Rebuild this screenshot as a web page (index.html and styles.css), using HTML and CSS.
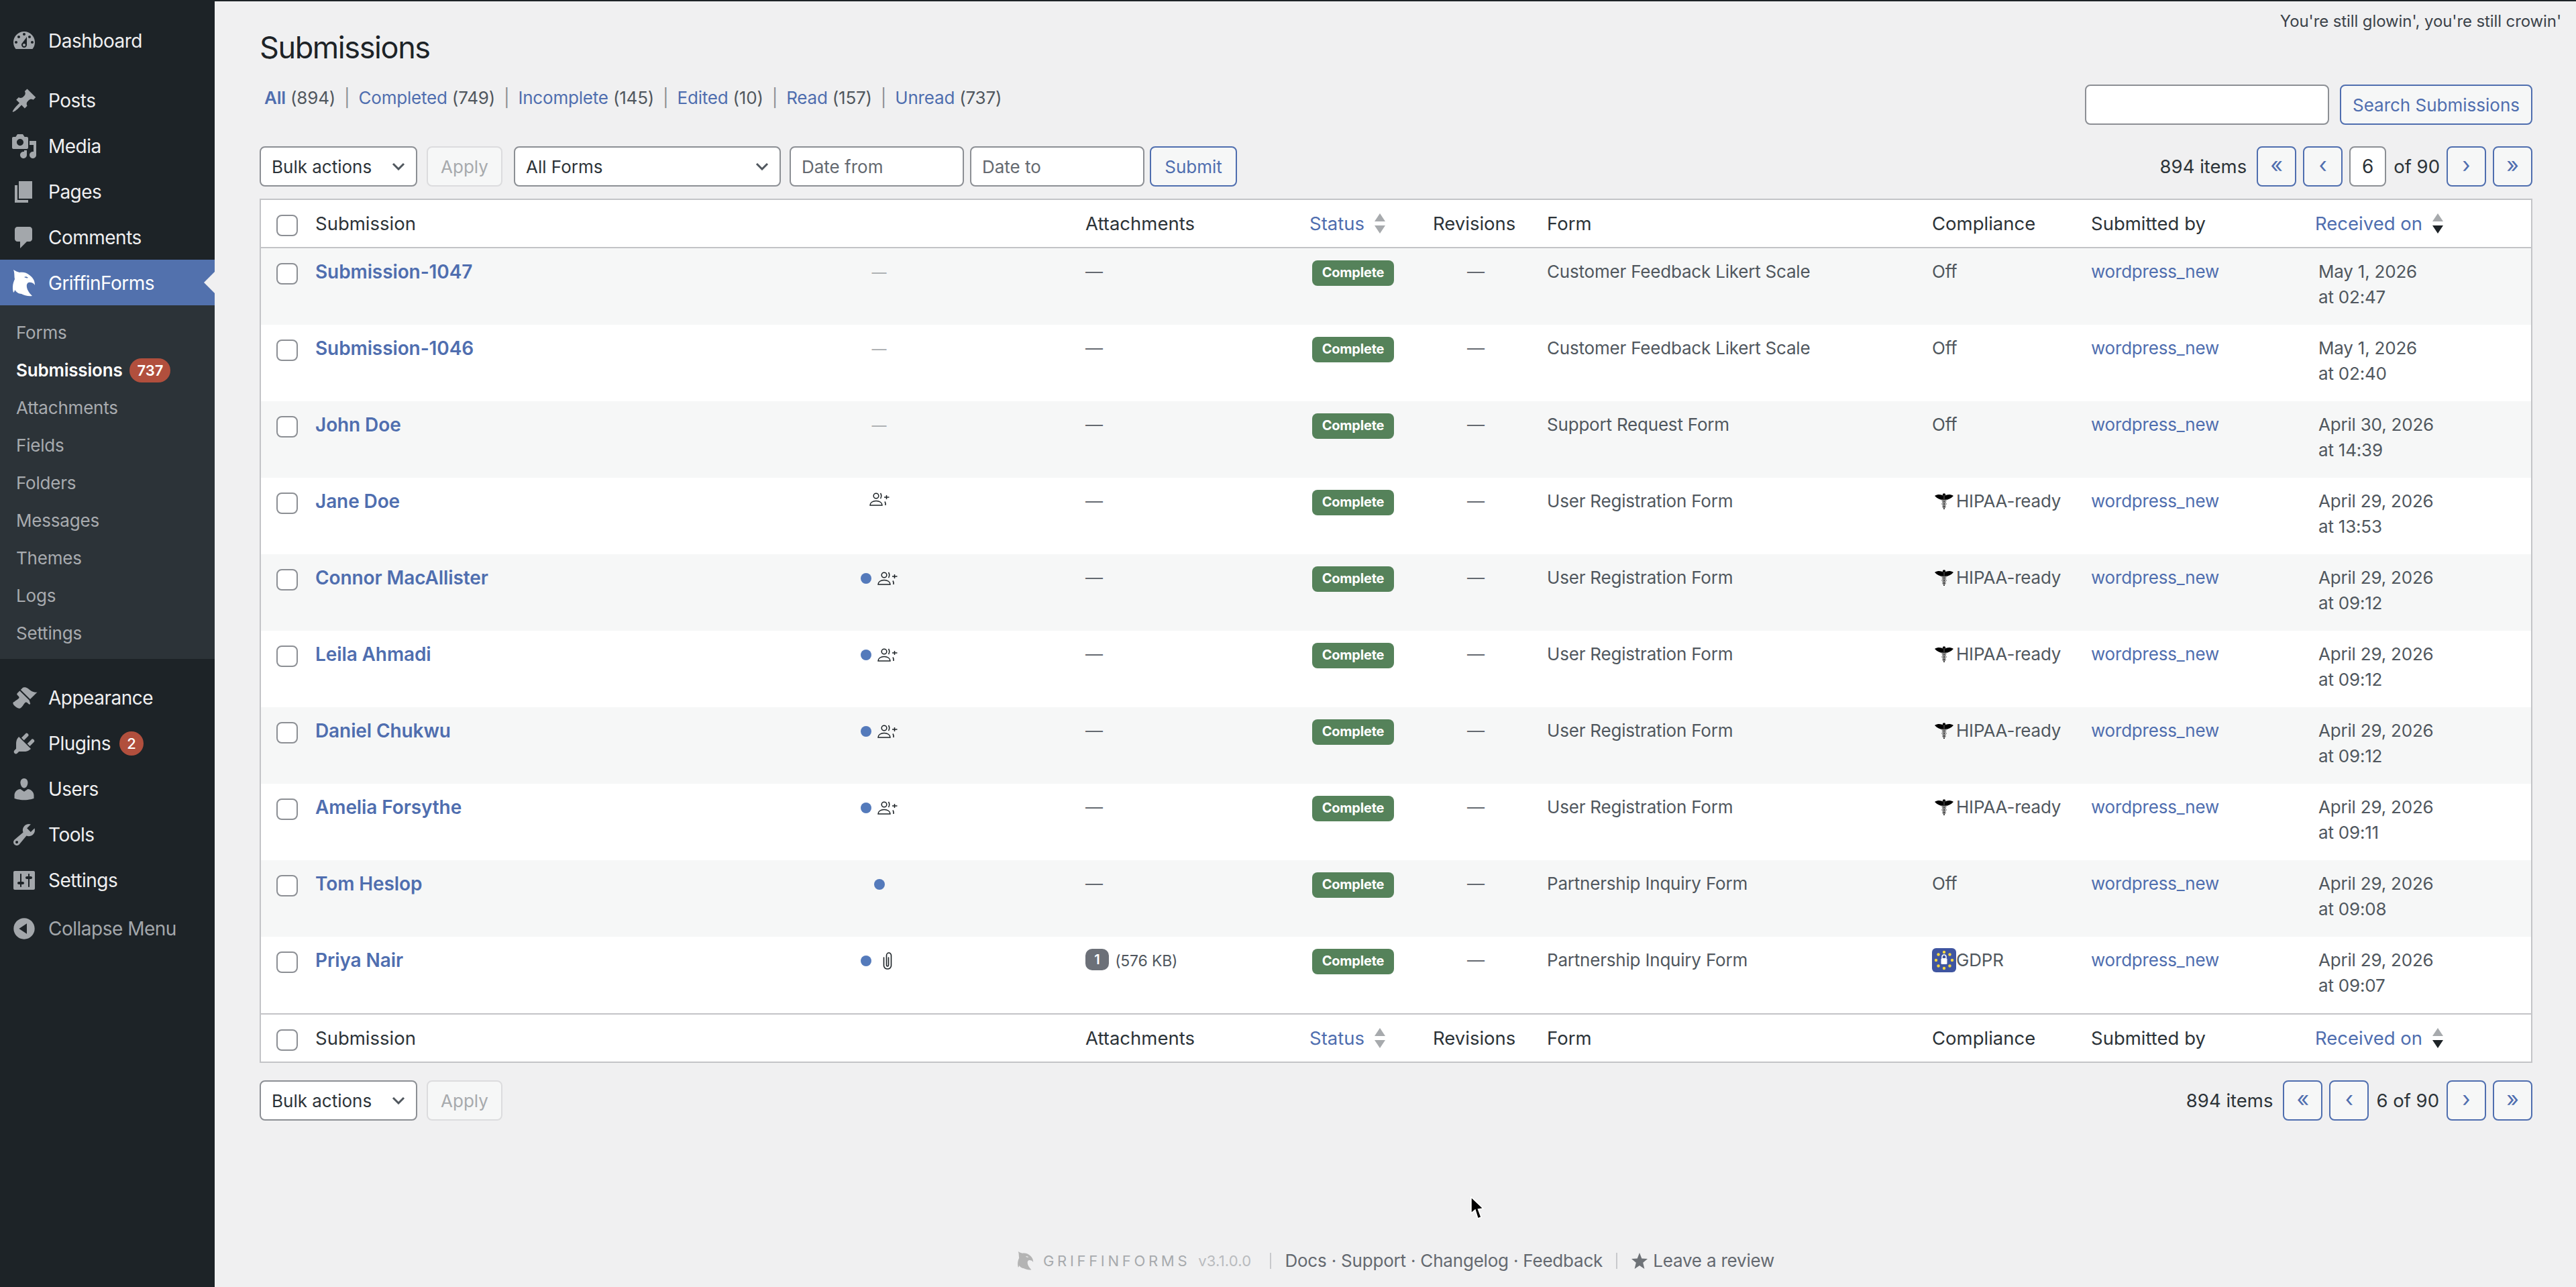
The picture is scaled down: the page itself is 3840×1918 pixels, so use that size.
FILE: index.html
```html
<!DOCTYPE html>
<html lang="en">
  <head>
    <meta charset="UTF-8" />
    <title>Submissions</title>
    <link rel="stylesheet" href="styles.css">
  </head>
  <body>
    <svg class="defs" width="0" height="0">
      <symbol id="griffin" viewBox="0 0 34 40">
        <path fill-rule="evenodd" d="M1 0 C4 2 7 3 10 4 C15 3 21 4 25 8 C29 11 33 15 33 23 C31 20 29 19 27 19 C24 18 22 19 21 22 C20 27 23 33 29 39 C23 40 17 38 13 36 C9 36 5 33 3 30 C3 32 2 33 1 34 C-1 27 0 20 3 14 C2 9 3 5 1 0 Z M17 11 C19 10 21 10 23 12 C21 13 19 12 17 11 Z" />
      </symbol>
      <symbol id="person-plus" viewBox="0 0 30 20">
        <g fill="none" stroke="#1d2327" stroke-width="1.500">
          <circle cx="10" cy="5" r="3.800" />
          <path d="M16.500 1 q2.500 4 0 8" />
          <path d="M1 19 c0-4 4-6.500 9-6.500 s9 2.500 9 6.500 z" />
          <path d="M23 13.500 q1.500 2.500 1 5.500" />
          <path d="M25.500 4 v6 M22 7 h7.500" />
        </g>
      </symbol>
      <symbol id="caduceus" viewBox="0 0 28 24">
        <path fill="#000" d="M0 4 C5 1 10 2 13 4 L13 10 C8 10 4 8 0 4 Z M28 4 C23 1 18 2 15 4 L15 10 C20 10 24 8 28 4 Z" />
        <circle cx="14" cy="2.500" r="2.200" fill="#000" />
        <path fill="#333" d="M13 3 h2 v21 h-2 z" />
        <path fill="none" stroke="#888" stroke-width="1.500" d="M10 10 C18 11 18 13 14 14 C10 15 10 17 14 18 C17 19 17 21 14 22 M18 10 C10 11 10 13 14 14 C18 15 18 17 14 18 C11 19 11 21 14 22" />
      </symbol>
    </svg>

    <aside class="sidebar">
      <ul class="menu">
        <li class="menu-item">
          <svg class="menu-icon" viewBox="0 0 20 20"><path d="M3.760 16h12.480c1.100-1.370 1.760-3.110 1.760-5 0-4.420-3.580-8-8-8s-8 3.580-8 8c0 1.890.660 3.630 1.760 5zM10 4c.550 0 1 .450 1 1s-.450 1-1 1-1-.450-1-1 .450-1 1-1zM6 6c.550 0 1 .450 1 1s-.450 1-1 1-1-.450-1-1 .450-1 1-1zm8 0c.550 0 1 .450 1 1s-.450 1-1 1-1-.450-1-1 .450-1 1-1zm-5.370 5.550L12 7v6c0 1.100-.900 2-2 2s-2-.900-2-2c0-.570.240-1.080.630-1.450zM4 10c.550 0 1 .450 1 1s-.450 1-1 1-1-.450-1-1 .450-1 1-1zm12 0c.550 0 1 .450 1 1s-.450 1-1 1-1-.450-1-1 .450-1 1-1zm-5 3c0-.550-.450-1-1-1s-1 .450-1 1 .450 1 1 1 1-.450 1-1z" /></svg>
          Dashboard
        </li>
        <li class="menu-item menu-gap">
          <svg class="menu-icon" viewBox="0 0 20 20"><path d="M10.440 3.020l1.820-1.820 6.360 6.350-1.830 1.820c-1.050-.680-2.480-.570-3.410.360l-.750.750c-.920.930-1.040 2.350-.350 3.410l-1.830 1.820-2.410-2.410-2.800 2.790c-.420.420-3.380 2.710-3.800 2.290s1.860-3.390 2.280-3.810l2.790-2.790L4.100 9.360l1.830-1.820c1.050.690 2.480.570 3.400-.360l.750-.750c.930-.920 1.050-2.350.360-3.410z" /></svg>
          Posts
        </li>
        <li class="menu-item">
          <svg class="menu-icon" viewBox="0 0 20 20"><path d="M13 11V4c0-.550-.450-1-1-1h-1.670L9 1H5L3.670 3H2c-.550 0-1 .450-1 1v7c0 .550.450 1 1 1h10c.550 0 1-.450 1-1zM7 4.500c1.380 0 2.500 1.120 2.500 2.500S8.380 9.500 7 9.500 4.500 8.380 4.500 7 5.620 4.500 7 4.500zM14 6h5v10.500c0 1.380-1.120 2.500-2.500 2.500S14 17.880 14 16.500s1.120-2.500 2.500-2.500c.170 0 .340.020.500.050V9h-3V6zm-4 8.050V13h2v3.500c0 1.380-1.120 2.500-2.500 2.500S7 17.880 7 16.500 8.120 14 9.500 14c.170 0 .340.020.500.050z" /></svg>
          Media
        </li>
        <li class="menu-item">
          <svg class="menu-icon" viewBox="0 0 20 20"><path d="M6 15V2h10v13H6zm-1 1h8v2H3V5h2v11z" /></svg>
          Pages
        </li>
        <li class="menu-item">
          <svg class="menu-icon" viewBox="0 0 20 20"><path d="M5 2h9c1.100 0 2 .900 2 2v7c0 1.100-.900 2-2 2h-2l-5 5v-5H5c-1.100 0-2-.900-2-2V4c0-1.100.900-2 2-2z" /></svg>
          Comments
        </li>
        <li class="menu-item menu-current">
          <svg class="griffin-icon"><use href="#griffin" /></svg>
          GriffinForms
        </li>
      </ul>

      <ul class="submenu">
        <li>Forms</li>
        <li class="submenu-current">Submissions <span class="count count-wide">737</span></li>
        <li>Attachments</li>
        <li>Fields</li>
        <li>Folders</li>
        <li>Messages</li>
        <li>Themes</li>
        <li>Logs</li>
        <li>Settings</li>
      </ul>

      <ul class="menu menu-lower">
        <li class="menu-item">
          <svg class="menu-icon" viewBox="0 0 20 20"><path d="M14.480 11.060L7.410 3.990l1.500-1.500c.500-.560 2.300-.470 3.510.320 1.210.800 1.430 1.280 2.910 2.100 1.180.640 2.450 1.260 4.450.850zm-.710.710L6.700 4.700 4.930 6.470c-.390.390-.390 1.020 0 1.410l1.060 1.060c.390.390.390 1.030 0 1.420-.600.600-1.430 1.110-2.210 1.690-.350.260-.700.530-1.010.840C1.430 13.230 1 14.500 3.500 16.500s3.440 1.570 4.780.200c.280-.280.540-.640.800-1.010.580-.780 1.090-1.610 1.690-2.210.390-.390 1.020-.390 1.410 0l1.060 1.060c.390.390 1.020.390 1.410 0z" /></svg>
          Appearance
        </li>
        <li class="menu-item">
          <svg class="menu-icon" viewBox="0 0 20 20"><path d="M13.110 4.360L9.870 7.600 8 5.730l3.240-3.240c.350-.340 1.050-.200 1.560.320.520.510.660 1.210.310 1.550zm-8 1.770l.910-1.120 9.010 9.010-1.190.840c-.710.710-2.630 1.160-3.820 1.160H6.140L4.900 17.260c-.590.590-1.540.590-2.120 0-.590-.580-.590-1.530 0-2.120l1.240-1.240v-3.880c0-1.130.400-3.190 1.090-3.890zm7.260 3.970l3.240-3.240c.340-.350 1.040-.210 1.550.31.520.510.660 1.210.310 1.550l-3.240 3.250z" /></svg>
          Plugins <span class="count count-menu">2</span>
        </li>
        <li class="menu-item">
          <svg class="menu-icon" viewBox="0 0 20 20"><path d="M10 9.250c-2.270 0-2.730-3.440-2.730-3.440C7 4.020 7.820 2 9.970 2c2.160 0 2.980 2.020 2.710 3.810 0 0-.410 3.440-2.680 3.440zm0 2.570L12.720 10c2.390 0 4.520 2.330 4.520 4.530v2.490s-3.650 1.130-7.240 1.130c-3.650 0-7.240-1.130-7.240-1.130v-2.490c0-2.250 1.940-4.480 4.470-4.480z" /></svg>
          Users
        </li>
        <li class="menu-item">
          <svg class="menu-icon" viewBox="0 0 20 20"><path d="M16.680 9.770c-1.340 1.340-3.300 1.670-4.950.990l-5.410 6.520c-.990.990-2.590.990-3.580 0s-.990-2.590 0-3.570l6.520-5.420c-.680-1.650-.350-3.610.990-4.950 1.280-1.280 3.120-1.620 4.720-1.060l-2.890 2.890 2.820 2.820 2.860-2.870c.530 1.580.180 3.390-1.080 4.650zM3.810 16.210c.400.390 1.040.390 1.430 0 .400-.400.400-1.040 0-1.430-.390-.400-1.030-.400-1.430 0-.390.390-.390 1.030 0 1.430z" /></svg>
          Tools
        </li>
        <li class="menu-item">
          <svg class="menu-icon" viewBox="0 0 20 20"><path d="M18 16V4c0-.550-.450-1-1-1H3c-.550 0-1 .450-1 1v12c0 .550.450 1 1 1h14c.550 0 1-.450 1-1zM8 11h1c.550 0 1 .450 1 1s-.450 1-1 1H8v1.500c0 .280-.220.500-.500.500s-.500-.220-.500-.500V13H6c-.550 0-1-.450-1-1s.450-1 1-1h1V5.500c0-.280.220-.500.500-.500s.500.220.500.500V11zm5-2h-1c-.550 0-1-.450-1-1s.450-1 1-1h1V5.500c0-.280.220-.500.500-.500s.500.220.500.500V7h1c.550 0 1 .450 1 1s-.450 1-1 1h-1v5.500c0 .280-.220.500-.500.500s-.500-.220-.500-.500V9z" /></svg>
          Settings
        </li>
        <li class="menu-item menu-collapse">
          <svg class="menu-icon" viewBox="0 0 20 20"><path d="M10 2.160c4.330 0 7.840 3.510 7.840 7.840s-3.510 7.840-7.840 7.840S2.160 14.330 2.160 10 5.710 2.160 10 2.160zm2 11.720V6.120L6.180 9.970z" /></svg>
          Collapse Menu
        </li>
      </ul>
    </aside>

    <main class="content">
      <p class="dolly">You're still glowin', you're still crowin'</p>

      <div class="wrap">
        <h1>Submissions</h1>

        <div class="top-row">
          <ul class="subsubsub">
            <li><a class="current" href="#">All</a> (894)</li>
            <li><a href="#">Completed</a> (749)</li>
            <li><a href="#">Incomplete</a> (145)</li>
            <li><a href="#">Edited</a> (10)</li>
            <li><a href="#">Read</a> (157)</li>
            <li><a href="#">Unread</a> (737)</li>
          </ul>
          <form class="search-box">
            <input class="field search-input" type="search" />
            <button class="btn btn-search" type="button">Search Submissions</button>
          </form>
        </div>

        <div class="tablenav">
          <select class="field select select-bulk"><option>Bulk actions</option></select>
          <button class="btn btn-disabled btn-apply" type="button">Apply</button>
          <select class="field select select-forms"><option>All Forms</option></select>
          <input class="field date-input" type="text" placeholder="Date from" />
          <input class="field date-input" type="text" placeholder="Date to" />
          <button class="btn btn-submit" type="button">Submit</button>
          <div class="pages">
            <span class="items">894 items</span>
            <a class="page-btn" href="#">«</a>
            <a class="page-btn" href="#">‹</a>
            <input class="field page-input" type="text" value="6" />
            <span class="of">of 90</span>
            <a class="page-btn" href="#">›</a>
            <a class="page-btn" href="#">»</a>
          </div>
        </div>

        <table class="list-table">
          <colgroup>
            <col class="c-cb"><col class="c-title"><col class="c-flags"><col class="c-att"><col class="c-status"><col class="c-rev"><col class="c-form"><col class="c-comp"><col class="c-user"><col class="c-date">
          </colgroup>
          <thead>
            <tr>
              <th class="cb"><input class="check" type="checkbox" /></th>
              <th>Submission</th>
              <th></th>
              <th>Attachments</th>
              <th><a class="sort" href="#">Status <span class="arrows"><i class="up"></i><i class="down"></i></span></a></th>
              <th>Revisions</th>
              <th>Form</th>
              <th>Compliance</th>
              <th>Submitted by</th>
              <th><a class="sort" href="#">Received on <span class="arrows"><i class="up"></i><i class="down active"></i></span></a></th>
            </tr>
          </thead>
          <tbody>
            <tr>
              <td class="cb"><input class="check" type="checkbox" /></td>
              <td><a class="row-title" href="#">Submission-1047</a></td>
              <td class="flags"><span class="flag-dash">—</span></td>
              <td><span class="dash">—</span></td>
              <td><span class="status">Complete</span></td>
              <td class="rev"><span class="dash">—</span></td>
              <td>Customer Feedback Likert Scale</td>
              <td>Off</td>
              <td><a href="#">wordpress_new</a></td>
              <td class="date">May 1, 2026<br>at 02:47</td>
            </tr>
            <tr>
              <td class="cb"><input class="check" type="checkbox" /></td>
              <td><a class="row-title" href="#">Submission-1046</a></td>
              <td class="flags"><span class="flag-dash">—</span></td>
              <td><span class="dash">—</span></td>
              <td><span class="status">Complete</span></td>
              <td class="rev"><span class="dash">—</span></td>
              <td>Customer Feedback Likert Scale</td>
              <td>Off</td>
              <td><a href="#">wordpress_new</a></td>
              <td class="date">May 1, 2026<br>at 02:40</td>
            </tr>
            <tr>
              <td class="cb"><input class="check" type="checkbox" /></td>
              <td><a class="row-title" href="#">John Doe</a></td>
              <td class="flags"><span class="flag-dash">—</span></td>
              <td><span class="dash">—</span></td>
              <td><span class="status">Complete</span></td>
              <td class="rev"><span class="dash">—</span></td>
              <td>Support Request Form</td>
              <td>Off</td>
              <td><a href="#">wordpress_new</a></td>
              <td class="date">April 30, 2026<br>at 14:39</td>
            </tr>
            <tr>
              <td class="cb"><input class="check" type="checkbox" /></td>
              <td><a class="row-title" href="#">Jane Doe</a></td>
              <td class="flags"><div class="flag-group flag-raised"><svg class="flag-icon"><use href="#person-plus" /></svg></div></td>
              <td><span class="dash">—</span></td>
              <td><span class="status">Complete</span></td>
              <td class="rev"><span class="dash">—</span></td>
              <td>User Registration Form</td>
              <td><span class="comp"><svg class="hipaa"><use href="#caduceus" /></svg>HIPAA-ready</span></td>
              <td><a href="#">wordpress_new</a></td>
              <td class="date">April 29, 2026<br>at 13:53</td>
            </tr>
            <tr>
              <td class="cb"><input class="check" type="checkbox" /></td>
              <td><a class="row-title" href="#">Connor MacAllister</a></td>
              <td class="flags"><div class="flag-group"><span class="dot"></span><svg class="flag-icon"><use href="#person-plus" /></svg></div></td>
              <td><span class="dash">—</span></td>
              <td><span class="status">Complete</span></td>
              <td class="rev"><span class="dash">—</span></td>
              <td>User Registration Form</td>
              <td><span class="comp"><svg class="hipaa"><use href="#caduceus" /></svg>HIPAA-ready</span></td>
              <td><a href="#">wordpress_new</a></td>
              <td class="date">April 29, 2026<br>at 09:12</td>
            </tr>
            <tr>
              <td class="cb"><input class="check" type="checkbox" /></td>
              <td><a class="row-title" href="#">Leila Ahmadi</a></td>
              <td class="flags"><div class="flag-group"><span class="dot"></span><svg class="flag-icon"><use href="#person-plus" /></svg></div></td>
              <td><span class="dash">—</span></td>
              <td><span class="status">Complete</span></td>
              <td class="rev"><span class="dash">—</span></td>
              <td>User Registration Form</td>
              <td><span class="comp"><svg class="hipaa"><use href="#caduceus" /></svg>HIPAA-ready</span></td>
              <td><a href="#">wordpress_new</a></td>
              <td class="date">April 29, 2026<br>at 09:12</td>
            </tr>
            <tr>
              <td class="cb"><input class="check" type="checkbox" /></td>
              <td><a class="row-title" href="#">Daniel Chukwu</a></td>
              <td class="flags"><div class="flag-group"><span class="dot"></span><svg class="flag-icon"><use href="#person-plus" /></svg></div></td>
              <td><span class="dash">—</span></td>
              <td><span class="status">Complete</span></td>
              <td class="rev"><span class="dash">—</span></td>
              <td>User Registration Form</td>
              <td><span class="comp"><svg class="hipaa"><use href="#caduceus" /></svg>HIPAA-ready</span></td>
              <td><a href="#">wordpress_new</a></td>
              <td class="date">April 29, 2026<br>at 09:12</td>
            </tr>
            <tr>
              <td class="cb"><input class="check" type="checkbox" /></td>
              <td><a class="row-title" href="#">Amelia Forsythe</a></td>
              <td class="flags"><div class="flag-group"><span class="dot"></span><svg class="flag-icon"><use href="#person-plus" /></svg></div></td>
              <td><span class="dash">—</span></td>
              <td><span class="status">Complete</span></td>
              <td class="rev"><span class="dash">—</span></td>
              <td>User Registration Form</td>
              <td><span class="comp"><svg class="hipaa"><use href="#caduceus" /></svg>HIPAA-ready</span></td>
              <td><a href="#">wordpress_new</a></td>
              <td class="date">April 29, 2026<br>at 09:11</td>
            </tr>
            <tr>
              <td class="cb"><input class="check" type="checkbox" /></td>
              <td><a class="row-title" href="#">Tom Heslop</a></td>
              <td class="flags"><div class="flag-group"><span class="dot"></span></div></td>
              <td><span class="dash">—</span></td>
              <td><span class="status">Complete</span></td>
              <td class="rev"><span class="dash">—</span></td>
              <td>Partnership Inquiry Form</td>
              <td>Off</td>
              <td><a href="#">wordpress_new</a></td>
              <td class="date">April 29, 2026<br>at 09:08</td>
            </tr>
            <tr>
              <td class="cb"><input class="check" type="checkbox" /></td>
              <td><a class="row-title" href="#">Priya Nair</a></td>
              <td class="flags">
                <div class="flag-group">
                  <span class="dot"></span>
                  <svg class="clip-icon" viewBox="0 0 18 26"><path fill="none" stroke="#1d2327" stroke-width="1.600" stroke-linecap="round" d="M10.500 8 V19 a1.500 2 0 0 1 -3 0 V5 a3.500 4 0 0 1 7 0 V20 a5.500 5 0 0 1 -11 0 V8" /></svg>
                </div>
              </td>
              <td><span class="att-count">1</span> <span class="att-size">(576 KB)</span></td>
              <td><span class="status">Complete</span></td>
              <td class="rev"><span class="dash">—</span></td>
              <td>Partnership Inquiry Form</td>
              <td>
                <span class="comp">
                  <svg class="gdpr" viewBox="0 0 36 36">
                    <rect width="36" height="36" rx="6" fill="#3f55a0" />
                    <g fill="#f5d63d">
                      <circle cx="18" cy="6" r="2.200" /><circle cx="9.500" cy="9.500" r="2.200" /><circle cx="26.500" cy="9.500" r="2.200" />
                      <circle cx="6" cy="18" r="2.200" /><circle cx="30" cy="18" r="2.200" />
                      <circle cx="9.500" cy="26.500" r="2.200" /><circle cx="26.500" cy="26.500" r="2.200" /><circle cx="18" cy="30" r="2.200" />
                    </g>
                    <rect x="13.500" y="15" width="9" height="9" rx="1.500" fill="#fff" />
                    <path d="M15 15 v-2 a3 3 0 0 1 6 0 v2" fill="none" stroke="#fff" stroke-width="1.500" />
                  </svg>GDPR
                </span>
              </td>
              <td><a href="#">wordpress_new</a></td>
              <td class="date">April 29, 2026<br>at 09:07</td>
            </tr>
          </tbody>
          <tfoot>
            <tr>
              <th class="cb"><input class="check" type="checkbox" /></th>
              <th>Submission</th>
              <th></th>
              <th>Attachments</th>
              <th><a class="sort" href="#">Status <span class="arrows"><i class="up"></i><i class="down"></i></span></a></th>
              <th>Revisions</th>
              <th>Form</th>
              <th>Compliance</th>
              <th>Submitted by</th>
              <th><a class="sort" href="#">Received on <span class="arrows"><i class="up"></i><i class="down active"></i></span></a></th>
            </tr>
          </tfoot>
        </table>

        <div class="tablenav tablenav-bottom">
          <select class="field select select-bulk"><option>Bulk actions</option></select>
          <button class="btn btn-disabled btn-apply" type="button">Apply</button>
          <div class="pages">
            <span class="items">894 items</span>
            <a class="page-btn" href="#">«</a>
            <a class="page-btn" href="#">‹</a>
            <span class="of of-plain">6 of 90</span>
            <a class="page-btn" href="#">›</a>
            <a class="page-btn" href="#">»</a>
          </div>
        </div>
      </div>

      <footer class="plugin-footer">
        <svg class="footer-logo"><use href="#griffin" /></svg>
        <span class="footer-name">GRIFFINFORMS</span>
        <span class="footer-version">v3.1.0.0</span>
        <span class="footer-sep"></span>
        <span class="footer-links">Docs · Support · Changelog · Feedback</span>
        <span class="footer-sep"></span>
        <svg class="footer-star" viewBox="0 0 24 24"><path d="M12 0 L15.300 8.400 L24 9 L17.200 14.700 L19.400 24 L12 18.900 L4.600 24 L6.800 14.700 L0 9 L8.700 8.400 Z" /></svg>
        <span class="footer-links">Leave a review</span>
      </footer>
    </main>

    <svg class="cursor" viewBox="0 0 22 36"><path d="M2 1 L2 25 L8 20 L12 33 L17 31 L12.500 19 L20 18 Z" fill="#000" stroke="#fff" stroke-width="1.500" /></svg>
  </body>
</html>
```

FILE: styles.css
```css
/* Reset */
* {
  margin: 0;
  padding: 0;
  box-sizing: border-box;
}

ul {
  list-style: none;
}

a {
  color: #4f6eaf;
  text-decoration: none;
}

body {
  display: flex;
  position: relative;
  min-height: 100vh;
  background-color: #f0f0f1;
  color: #3c434a;
  font-family: Inter, "Noto Sans", sans-serif;
  font-size: 26px;
  line-height: 38px;
  letter-spacing: -0.2px;
  overflow: hidden;
}

.defs {
  position: absolute;
}

/* Sidebar */
.sidebar {
  flex: 0 0 320px;
  background-color: #1d2327;
  padding-top: 26px;
}

.menu-item {
  position: relative;
  display: flex;
  align-items: center;
  gap: 16px;
  height: 68px;
  padding: 2px 0 0 16px;
  color: #f0f0f1;
  font-size: 28px;
  letter-spacing: -0.5px;
}

.menu-gap {
  margin-top: 21px;
}

.menu-icon {
  flex: none;
  width: 40px;
  height: 40px;
  fill: #a3a7ab;
}

.griffin-icon {
  flex: none;
  width: 34px;
  height: 40px;
  margin: 0 3px;
  fill: #fff;
}

.menu-current {
  background-color: #5271ad;
  color: #fff;
}

.menu-current::after {
  content: "";
  position: absolute;
  right: 0;
  top: 18px;
  border: 16px solid transparent;
  border-left: 0;
  border-right-color: #f0f0f1;
}

.submenu {
  background-color: #2c3338;
  padding: 12px 0 11px;
  color: #a8abaf;
}

.submenu li {
  display: flex;
  align-items: center;
  gap: 11px;
  height: 56px;
  padding: 2px 0 0 24px;
}

.submenu-current {
  color: #fff;
  font-weight: 600;
}

.count {
  display: inline-flex;
  justify-content: center;
  align-items: center;
  min-width: 36px;
  height: 36px;
  border-radius: 18px;
  background-color: #b14f3d;
  color: #fff;
  font-size: 22px;
  font-weight: 500;
  letter-spacing: 0;
}

.count-wide {
  min-width: 61px;
  font-weight: 600;
}

.count-menu {
  margin-left: -3px;
}

.menu-lower {
  margin-top: 23px;
}

.menu-collapse {
  margin-top: 4px;
  color: #a3a7ab;
}

/* Main */
.content {
  flex: 1;
  position: relative;
  padding: 2px 0 0 67px;
}

.content::before {
  content: "";
  position: absolute;
  top: 0;
  left: 0;
  right: 0;
  height: 2px;
  background-color: #1d2327;
}

.dolly {
  float: right;
  margin: 12px 22px 0 0;
  font-size: 24px;
  line-height: 36px;
  letter-spacing: -0.1px;
  color: #3c434a;
}

.wrap {
  margin: 41px 65px 0 0;
}

h1 {
  font-size: 45px;
  font-weight: 400;
  line-height: 56px;
  color: #1d2327;
  letter-spacing: -1.4px;
}

.top-row {
  display: flex;
  justify-content: space-between;
  height: 60px;
  margin-top: 27px;
}

.subsubsub {
  display: flex;
  padding: 1px 0 0 7px;
  color: #50575e;
}

.subsubsub li + li::before {
  content: "|";
  margin: 0 13px;
  color: #8c8f94;
}

.subsubsub .current {
  font-weight: 600;
}

.search-box {
  display: flex;
  gap: 16px;
}

.field {
  height: 60px;
  border: 2px solid #8c8f94;
  border-radius: 8px;
  background-color: #fff;
  color: #2c3338;
  font-family: inherit;
  font-size: 26px;
}

.search-input {
  width: 364px;
}

.btn {
  height: 60px;
  border: 2px solid #4f6eaf;
  border-radius: 8px;
  background-color: #f6f7f7;
  color: #4f6eaf;
  font-family: inherit;
  font-size: 26px;
}

.btn-search {
  width: 287px;
}

.btn-disabled {
  border-color: #dcdcde;
  color: #a7aaad;
}

.btn-apply {
  width: 113px;
  margin-left: 14px;
}

.btn-submit {
  width: 130px;
  margin-left: 8px;
}

.tablenav {
  display: flex;
  align-items: center;
  height: 60px;
  margin-top: 32px;
}

.tablenav-bottom {
  margin-top: 26px;
}

.select {
  appearance: none;
  padding: 0 40px 0 16px;
  background-image: url("data:image/svg+xml,%3Csvg xmlns='http://www.w3.org/2000/svg' width='20' height='12' viewBox='0 0 20 12'%3E%3Cpath d='M2 2l8 8 8-8' fill='none' stroke='%2350575e' stroke-width='3'/%3E%3C/svg%3E");
  background-repeat: no-repeat;
  background-position: right 16px center;
}

.select-bulk {
  width: 235px;
}

.select-forms {
  width: 398px;
  margin-left: 17px;
}

.date-input {
  width: 260px;
  margin-left: 13px;
  padding: 0 16px;
}

.date-input + .date-input {
  margin-left: 9px;
}

.date-input::placeholder {
  color: #646970;
  opacity: 1;
}

.pages {
  display: flex;
  align-items: center;
  gap: 10px;
  margin-left: auto;
  color: #2c3338;
  font-size: 27.500px;
  letter-spacing: 0;
}

.items {
  margin-right: 5px;
}

.page-btn {
  display: flex;
  justify-content: center;
  align-items: center;
  width: 59px;
  height: 60px;
  padding-bottom: 4px;
  border: 2px solid #4f6eaf;
  border-radius: 8px;
  background-color: #f6f7f7;
  font-size: 32px;
  line-height: 1;
}

.page-input {
  width: 55px;
  font-size: 28px;
  text-align: center;
}

.of {
  margin-left: 1px;
}

.of-plain {
  margin: 0 1px;
}

/* Table */
.list-table {
  width: 100%;
  margin-top: 18px;
  border: 2px solid #c3c4c7;
  border-collapse: separate;
  border-spacing: 0;
  table-layout: fixed;
  background-color: #fff;
  color: #50575e;
}

.c-cb { width: 61px; }
.c-title { width: 570px; }
.c-flags { width: 578px; }
.c-att { width: 334px; }
.c-status { width: 184px; }
.c-rev { width: 170px; }
.c-form { width: 574px; }
.c-comp { width: 237px; }
.c-user { width: 334px; }
.c-date { width: 342px; }

th {
  padding: 16px 0 16px 20px;
  text-align: left;
  font-size: 27.500px;
  font-weight: 400;
  letter-spacing: 0;
  color: #2c3338;
  white-space: nowrap;
}

thead th {
  height: 72px;
  border-bottom: 2px solid #c3c4c7;
}

tfoot th {
  height: 72px;
  border-top: 2px solid #c3c4c7;
}

td {
  height: 114px;
  padding: 16px 0 0 20px;
  vertical-align: top;
  white-space: nowrap;
}

tbody tr:nth-child(odd) {
  background-color: #f6f7f7;
}

th.cb,
td.cb {
  padding: 22px 0 0 23px;
  vertical-align: top;
}

.check {
  appearance: none;
  display: block;
  width: 32px;
  height: 32px;
  border: 2px solid #8c8f94;
  border-radius: 8px;
  background-color: #fff;
}

.row-title {
  font-size: 28px;
  font-weight: 600;
  letter-spacing: -0.1px;
}

.sort {
  display: inline-flex;
  align-items: center;
  gap: 15px;
}

.arrows {
  display: flex;
  flex-direction: column;
  gap: 6px;
}

.arrows i {
  display: block;
  width: 0;
  height: 0;
  border-left: 8px solid transparent;
  border-right: 8px solid transparent;
}

.arrows .up {
  border-bottom: 12px solid #a7aaad;
}

.arrows .down {
  border-top: 12px solid #a7aaad;
}

.arrows .down.active {
  border-top-color: #1d2327;
}

td.flags {
  padding-left: 3px;
  text-align: center;
}

.flag-dash {
  color: #a7aaad;
  font-size: 22px;
}

.flag-group {
  display: flex;
  justify-content: center;
  align-items: center;
  gap: 9px;
  height: 40px;
}

.flag-raised {
  height: 32px;
}

.dot {
  flex: none;
  width: 16px;
  height: 16px;
  border-radius: 50%;
  background-color: #547abb;
}

.flag-icon {
  flex: none;
  width: 30px;
  height: 20px;
}

.clip-icon {
  flex: none;
  width: 18px;
  height: 26px;
  margin: 0 6px;
}

.dash {
  color: #646970;
}

td.rev {
  padding: 16px 2px 0 0;
  text-align: center;
}

.status {
  display: inline-block;
  width: 122px;
  height: 38px;
  margin: 2px 0 0 4px;
  border-radius: 8px;
  background-color: #55825a;
  color: #fff;
  font-size: 20px;
  font-weight: 700;
  line-height: 37px;
  text-align: center;
  vertical-align: top;
}

.comp {
  display: inline-flex;
  align-items: center;
}

.hipaa {
  flex: none;
  width: 28px;
  height: 24px;
  margin: 0 4px;
}

.gdpr {
  flex: none;
  width: 36px;
  height: 36px;
}

.att-count {
  display: inline-block;
  width: 35px;
  height: 32px;
  margin-top: 2px;
  border-radius: 10px;
  background-color: #6c7078;
  color: #fff;
  font-size: 20px;
  font-weight: 600;
  line-height: 32px;
  text-align: center;
  vertical-align: top;
}

.att-size {
  margin-left: 2px;
  font-size: 23px;
}

td.date {
  padding-left: 25px;
}

/* Plugin footer */
.plugin-footer {
  display: flex;
  justify-content: center;
  align-items: center;
  height: 38px;
  margin-top: 190px;
  padding-right: 65px;
  color: #646970;
}

.footer-logo {
  width: 24px;
  height: 28px;
  margin-right: 14px;
  fill: #b4b4b4;
}

.footer-name {
  color: #a7aaad;
  font-size: 22px;
  letter-spacing: 4.700px;
}

.footer-version {
  margin-left: 12px;
  color: #b9bbbe;
  font-size: 22px;
  letter-spacing: 0.2px;
}

.footer-sep {
  width: 2px;
  height: 24px;
  margin: 0 20px 0 28px;
  background-color: #c8c9cc;
}

.footer-links + .footer-sep {
  margin-left: 20px;
}

.footer-star {
  width: 24px;
  height: 24px;
  margin: 0 8px 0 1px;
  fill: #6e7277;
}

.cursor {
  position: absolute;
  left: 2191px;
  top: 1783px;
  width: 22px;
  height: 36px;
}
```
